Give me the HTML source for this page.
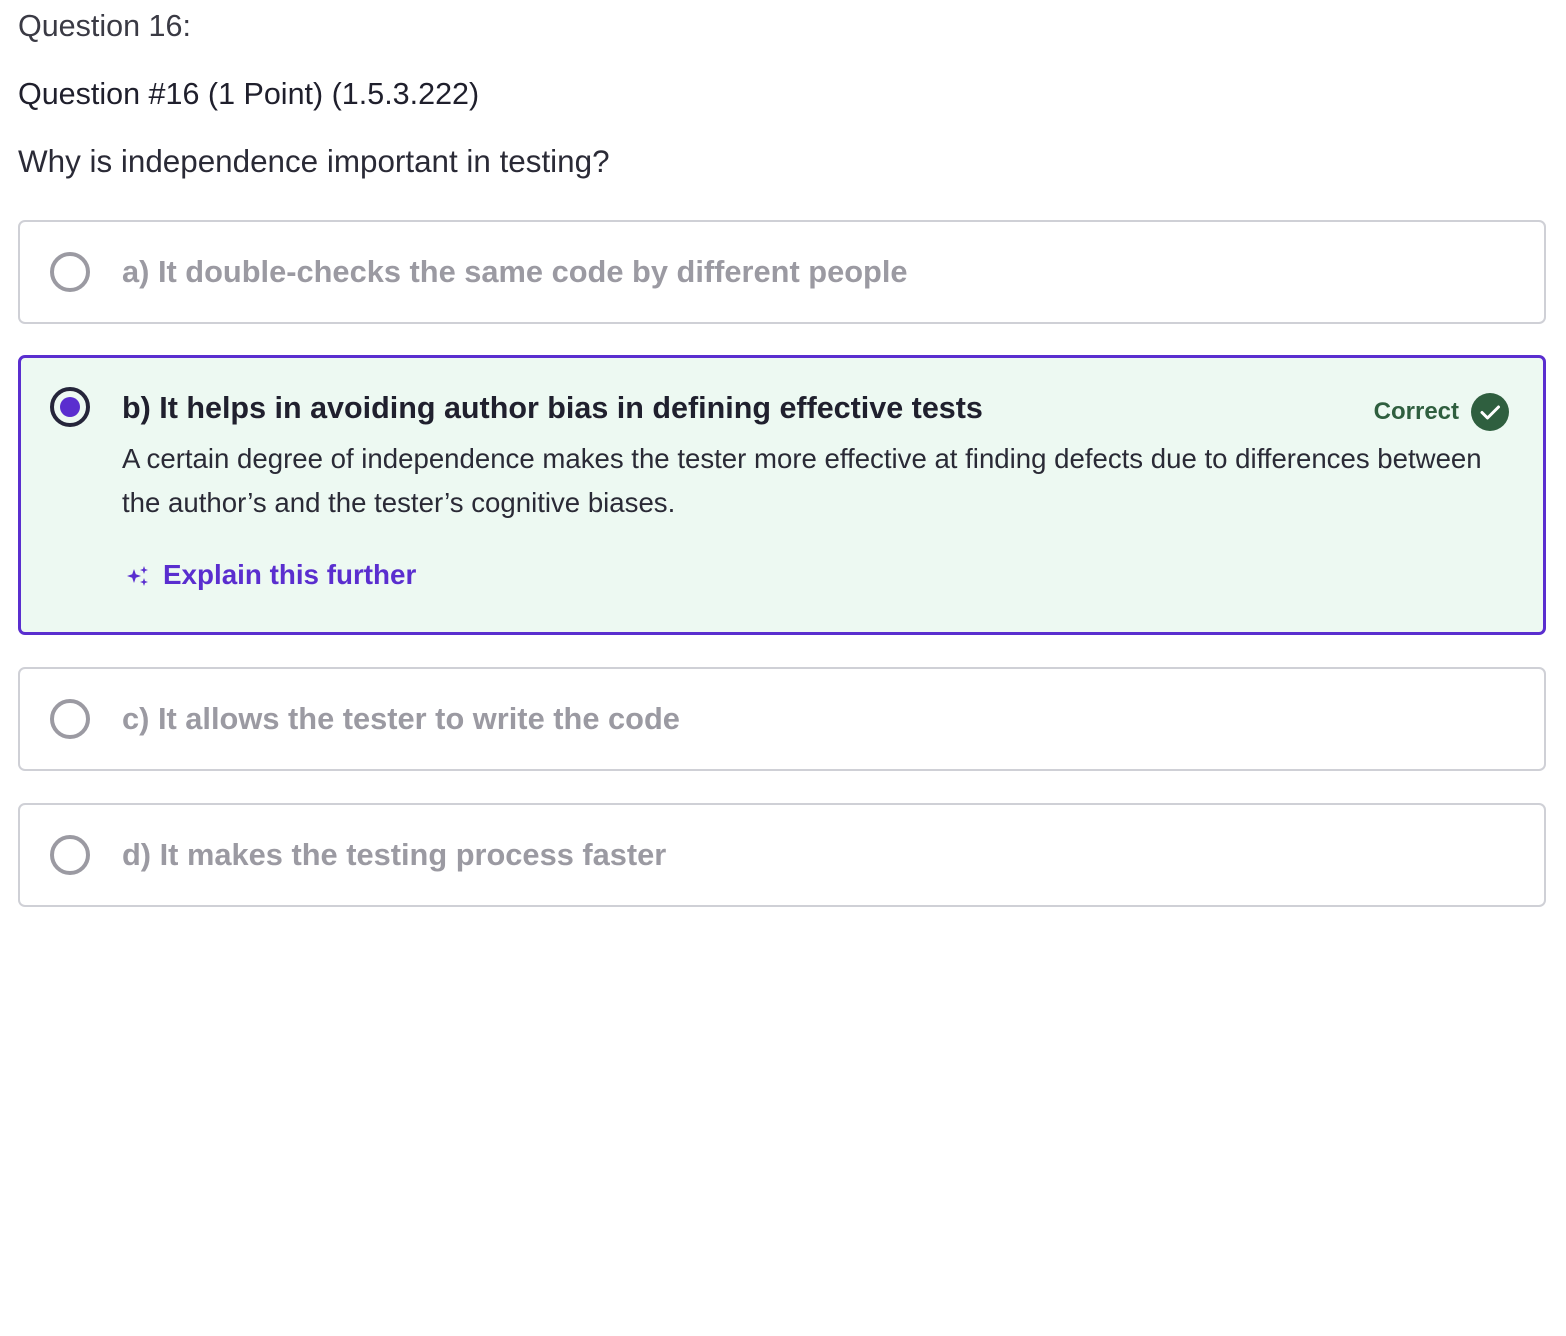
<!DOCTYPE html>
<html><head><meta charset="utf-8"><style>
body{margin:0;width:1566px;height:1336px;background:#fff;font-family:"Liberation Sans",Arial,sans-serif;position:relative;overflow:hidden}
.t{position:absolute;left:18px;white-space:nowrap}
.box{position:absolute;left:18px;width:1528px;border:2px solid #cfd0d6;border-radius:7px;box-sizing:border-box;background:#fff}
.radio{position:absolute;left:30px;width:40px;height:40px;border:4px solid #9b9aa2;border-radius:50%;box-sizing:border-box}
.opt{position:absolute;left:102px;font-weight:bold;font-size:30.8px;color:#9b9aa2;white-space:nowrap}
</style></head><body>
<div class="t" style="top:9px;font-size:30.5px;color:#3a3a44">Question 16:</div>
<div class="t" style="top:77px;font-size:30.5px;color:#1f1f2c">Question #16 (1 Point) (1.5.3.222)</div>
<div class="t" style="top:144px;font-size:31.4px;color:#2a2a36">Why is independence important in testing?</div>

<div class="box" style="top:220px;height:104px"><div class="radio" style="top:30px"></div><div class="opt" style="top:32px">a) It double-checks the same code by different people</div></div>

<div class="box" style="top:355px;height:280px;border:3px solid #5a2ecf;background:#edf9f2">
<div class="radio" style="top:29px;left:29px;border-color:#25253a"><div style="position:absolute;left:6px;top:6px;width:20px;height:20px;border-radius:50%;background:#5a2ecf"></div></div>
<div class="opt" style="top:33px;left:101px;color:#20202e;font-size:30.5px">b) It helps in avoiding author bias in defining effective tests</div>
<div style="position:absolute;right:84px;top:40px;font-weight:bold;font-size:24px;color:#2f5f3f">Correct</div>
<div style="position:absolute;right:34px;top:35px;width:38px;height:38px;border-radius:50%;background:#2f5f3f"><svg width="38" height="38" viewBox="0 0 38 38"><path d="M11 19.5l5.5 5.5L27.5 14" fill="none" stroke="#fff" stroke-width="3" stroke-linecap="round" stroke-linejoin="round"/></svg></div>
<div style="position:absolute;left:101px;top:79px;font-size:27.6px;line-height:44px;color:#2a2a36;width:1400px">A certain degree of independence makes the tester more effective at finding defects due to differences between the author’s and the tester’s cognitive biases.</div>
<svg style="position:absolute;left:105px;top:206px" width="24" height="24" viewBox="0 0 24 24"><path d="M8 5 L9.8 10.2 L15 12 L9.8 13.8 L8 19 L6.2 13.8 L1 12 L6.2 10.2Z M18 2 L19 5 L22 6 L19 7 L18 10 L17 7 L14 6 L17 5Z M18 14 L19 17 L22 18 L19 19 L18 22 L17 19 L14 18 L17 17Z" fill="#5a2ecf"/></svg>
<div style="position:absolute;left:142px;top:201px;font-weight:bold;font-size:27.8px;color:#5a2ecf">Explain this further</div>
</div>

<div class="box" style="top:667px;height:104px"><div class="radio" style="top:30px"></div><div class="opt" style="top:32px">c) It allows the tester to write the code</div></div>
<div class="box" style="top:803px;height:104px"><div class="radio" style="top:30px"></div><div class="opt" style="top:32px">d) It makes the testing process faster</div></div>
</body></html>
